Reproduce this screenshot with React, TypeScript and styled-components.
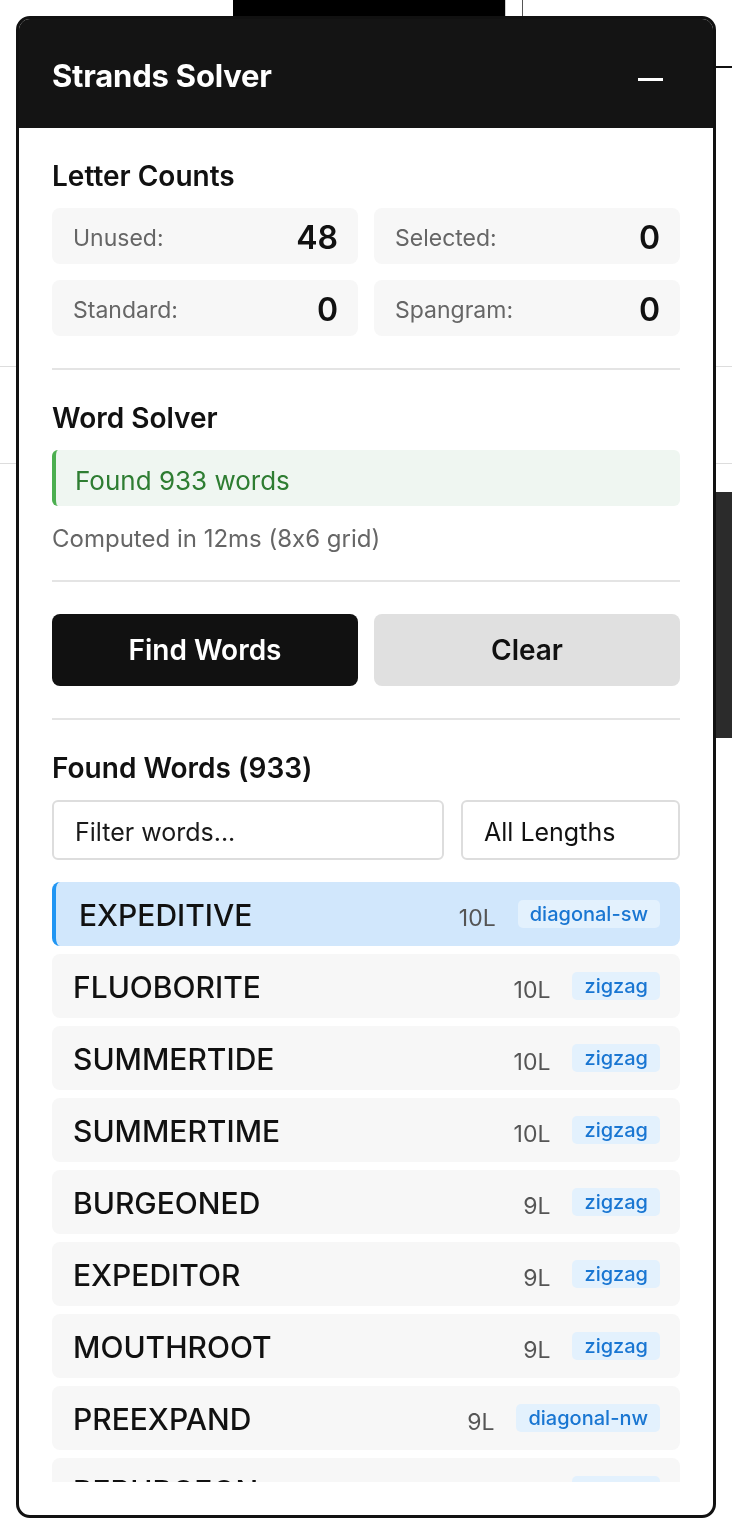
import React, { useState } from "react"
import styled, { createGlobalStyle } from "styled-components"

const GlobalStyle = createGlobalStyle`
  html, body {
    margin: 0;
    padding: 0;
    background: #fff;
    font-family: Inter, "Noto Sans", "Liberation Sans", sans-serif;
    font-feature-settings: "calt" 0;
    color: #111;
  }
  * { box-sizing: border-box; }
`

// Page behind the floating solver panel
const Backdrop = styled.div`
  width: 732px;
  height: 1536px;
  display: flex;
  flex-direction: column;
`

const TopRow = styled.div`
  height: 68px;
  display: flex;
`

const TopSpacer = styled.div`
  width: 233px;
`

const BlackTile = styled.div`
  width: 273px;
  height: 100%;
  background: #000;
  border-right: 1px solid #ccc;
`

const TopRest = styled.div`
  flex: 1;
  margin-left: 16px;
  border-left: 1px solid #555;
  border-bottom: 2px solid #111;
`

const RuledBand = styled.div<{ $h: number }>`
  height: ${(p) => p.$h}px;
  border-bottom: 1px solid #ddd;
`

const DarkRow = styled.div`
  margin-top: 28px;
  height: 246px;
  display: flex;
  justify-content: flex-end;
`

const DarkTile = styled.div`
  width: 300px;
  background: #2b2b2b;
`

// Panel
const Panel = styled.div`
  position: fixed;
  top: 16px;
  left: 16px;
  width: 700px;
  height: 1502px;
  border: 3px solid #111;
  border-radius: 14px;
  background: #fff;
  overflow: hidden;
  display: flex;
  flex-direction: column;
`

const PanelHeader = styled.div`
  height: 109px;
  flex-shrink: 0;
  background: #141414;
  padding: 4px 33px 0;
  display: flex;
  align-items: center;
  justify-content: space-between;
`

const PanelTitle = styled.h2`
  margin: 0;
  color: #fff;
  font-size: 31px;
  font-weight: 700;
  letter-spacing: -0.2px;
`

const MinimizeButton = styled.button`
  width: 46px;
  height: 40px;
  margin-right: 7px;
  border: none;
  background: transparent;
  padding: 0;
  display: flex;
  align-items: center;
  justify-content: center;
  cursor: pointer;
`

const MinusBar = styled.span`
  display: block;
  width: 25px;
  height: 3px;
  background: #fff;
  margin-top: 8px;
`

const PanelBody = styled.div`
  flex: 1;
  min-height: 0;
  padding: 0 33px 33px;
  display: flex;
  flex-direction: column;
`

const Section = styled.section<{ $grow?: boolean; $bottom?: number }>`
  padding: 32px 0 ${(p) => (p.$bottom ?? 32)}px;
  border-top: 2px solid #e4e4e4;
  display: flex;
  flex-direction: column;
  ${(p) => (p.$grow ? "flex: 1; min-height: 0; padding-bottom: 0;" : "")}

  &:first-child {
    border-top: none;
  }
`

const SectionTitle = styled.h3`
  margin: 0 0 16px;
  font-size: 28px;
  line-height: 32px;
  font-weight: 600;
  color: #111;
`

const StatGrid = styled.div`
  display: grid;
  grid-template-columns: 1fr 1fr;
  gap: 16px;
`

const StatCard = styled.div`
  height: 56px;
  background: #f7f7f7;
  border-radius: 8px;
  padding: 2px 20px 0 21px;
  display: flex;
  align-items: center;
  justify-content: space-between;
`

const StatLabel = styled.span`
  font-size: 23px;
  color: #666;
  padding-top: 2px;
`

const StatValue = styled.span`
  font-size: 32px;
  font-weight: 600;
  color: #111;
`

const StatusBox = styled.div`
  height: 56px;
  background: #eff6f1;
  border-left: 4px solid #4caf50;
  border-radius: 6px;
  padding: 4px 0 0 19px;
  display: flex;
  align-items: center;
  font-size: 26px;
  color: #2e7d32;
`

const Note = styled.p`
  margin: 18px 0 0;
  font-size: 24px;
  line-height: 30px;
  color: #666;
`

const ButtonRow = styled.div`
  display: grid;
  grid-template-columns: 1fr 1fr;
  gap: 16px;
`

const ActionButton = styled.button<{ $primary?: boolean }>`
  height: 72px;
  border: none;
  border-radius: 8px;
  font-family: inherit;
  font-size: 28px;
  font-weight: 600;
  cursor: pointer;
  background: ${(p) => (p.$primary ? "#111" : "#e0e0e0")};
  color: ${(p) => (p.$primary ? "#fff" : "#111")};
`

const FilterRow = styled.div`
  display: grid;
  grid-template-columns: minmax(0, 1fr) 219px;
  gap: 17px;
  margin-bottom: 22px;
`

const FilterInput = styled.input`
  width: 100%;
  min-width: 0;
  height: 60px;
  border: 2px solid #ddd;
  border-radius: 6px;
  padding: 4px 21px 0;
  font-family: inherit;
  font-size: 25px;
  color: #111;
  outline: none;

  &::placeholder {
    color: #1a1a1a;
  }
`

const LengthSelect = styled.select`
  width: 100%;
  min-width: 0;
  height: 60px;
  border: 2px solid #ddd;
  border-radius: 6px;
  padding: 4px 21px 0;
  font-family: inherit;
  font-size: 25px;
  color: #111;
  background: #fff;
  appearance: none;
  outline: none;
`

const WordList = styled.div`
  flex: 1;
  min-height: 0;
  overflow: hidden;
  display: flex;
  flex-direction: column;
  gap: 8px;
`

const WordRow = styled.div<{ $active?: boolean }>`
  flex-shrink: 0;
  height: 64px;
  border-radius: 8px;
  padding: 0 20px 0 ${(p) => (p.$active ? 23 : 21)}px;
  background: ${(p) => (p.$active ? "#d1e7fc" : "#f7f7f7")};
  border-left: ${(p) => (p.$active ? "4px solid #2196f3" : "none")};
  display: flex;
  align-items: center;
  cursor: pointer;
`

const WordText = styled.span`
  flex: 1;
  font-size: 30px;
  font-weight: 500;
  color: #111;
  padding-top: 2px;
`

const WordLength = styled.span`
  font-size: 23px;
  color: #555;
  margin-right: 22px;
  padding-top: 8px;
`

const DirectionTag = styled.span`
  height: 28px;
  padding: 0 12px;
  border-radius: 5px;
  background: #e3f1fd;
  color: #1976d2;
  font-size: 20px;
  font-weight: 500;
  display: flex;
  align-items: center;
`

const words = [
  { word: "EXPEDITIVE", len: 10, dir: "diagonal-sw" },
  { word: "FLUOBORITE", len: 10, dir: "zigzag" },
  { word: "SUMMERTIDE", len: 10, dir: "zigzag" },
  { word: "SUMMERTIME", len: 10, dir: "zigzag" },
  { word: "BURGEONED", len: 9, dir: "zigzag" },
  { word: "EXPEDITOR", len: 9, dir: "zigzag" },
  { word: "MOUTHROOT", len: 9, dir: "zigzag" },
  { word: "PREEXPAND", len: 9, dir: "diagonal-nw" },
  { word: "REBURGEON", len: 9, dir: "zigzag" },
  { word: "SUPERTHIN", len: 9, dir: "zigzag" },
]

export default function App() {
  const [selected, setSelected] = useState(0)
  const [filter, setFilter] = useState("")

  return (
    <>
      <GlobalStyle />
      <Backdrop>
        <TopRow>
          <TopSpacer />
          <BlackTile />
          <TopRest />
        </TopRow>
        <RuledBand $h={299} />
        <RuledBand $h={97} />
        <DarkRow>
          <DarkTile />
        </DarkRow>
      </Backdrop>

      <Panel>
        <PanelHeader>
          <PanelTitle>Strands Solver</PanelTitle>
          <MinimizeButton aria-label="Minimize">
            <MinusBar />
          </MinimizeButton>
        </PanelHeader>

        <PanelBody>
          <Section>
            <SectionTitle>Letter Counts</SectionTitle>
            <StatGrid>
              <StatCard>
                <StatLabel>Unused:</StatLabel>
                <StatValue>48</StatValue>
              </StatCard>
              <StatCard>
                <StatLabel>Selected:</StatLabel>
                <StatValue>0</StatValue>
              </StatCard>
              <StatCard>
                <StatLabel>Standard:</StatLabel>
                <StatValue>0</StatValue>
              </StatCard>
              <StatCard>
                <StatLabel>Spangram:</StatLabel>
                <StatValue>0</StatValue>
              </StatCard>
            </StatGrid>
          </Section>

          <Section $bottom={26}>
            <SectionTitle>Word Solver</SectionTitle>
            <StatusBox>Found 933 words</StatusBox>
            <Note>Computed in 12ms (8x6 grid)</Note>
          </Section>

          <Section>
            <ButtonRow>
              <ActionButton $primary>Find Words</ActionButton>
              <ActionButton>Clear</ActionButton>
            </ButtonRow>
          </Section>

          <Section $grow>
            <SectionTitle>Found Words (933)</SectionTitle>
            <FilterRow>
              <FilterInput
                placeholder="Filter words..."
                value={filter}
                onChange={(e) => setFilter(e.target.value)}
              />
              <LengthSelect defaultValue="all">
                <option value="all">All Lengths</option>
                <option value="10">10 letters</option>
                <option value="9">9 letters</option>
              </LengthSelect>
            </FilterRow>
            <WordList>
              {words
                .filter((w) => w.word.includes(filter.toUpperCase()))
                .map((w, i) => (
                  <WordRow key={w.word} $active={i === selected} onClick={() => setSelected(i)}>
                    <WordText>{w.word}</WordText>
                    <WordLength>{w.len}L</WordLength>
                    <DirectionTag>{w.dir}</DirectionTag>
                  </WordRow>
                ))}
            </WordList>
          </Section>
        </PanelBody>
      </Panel>
    </>
  )
}
